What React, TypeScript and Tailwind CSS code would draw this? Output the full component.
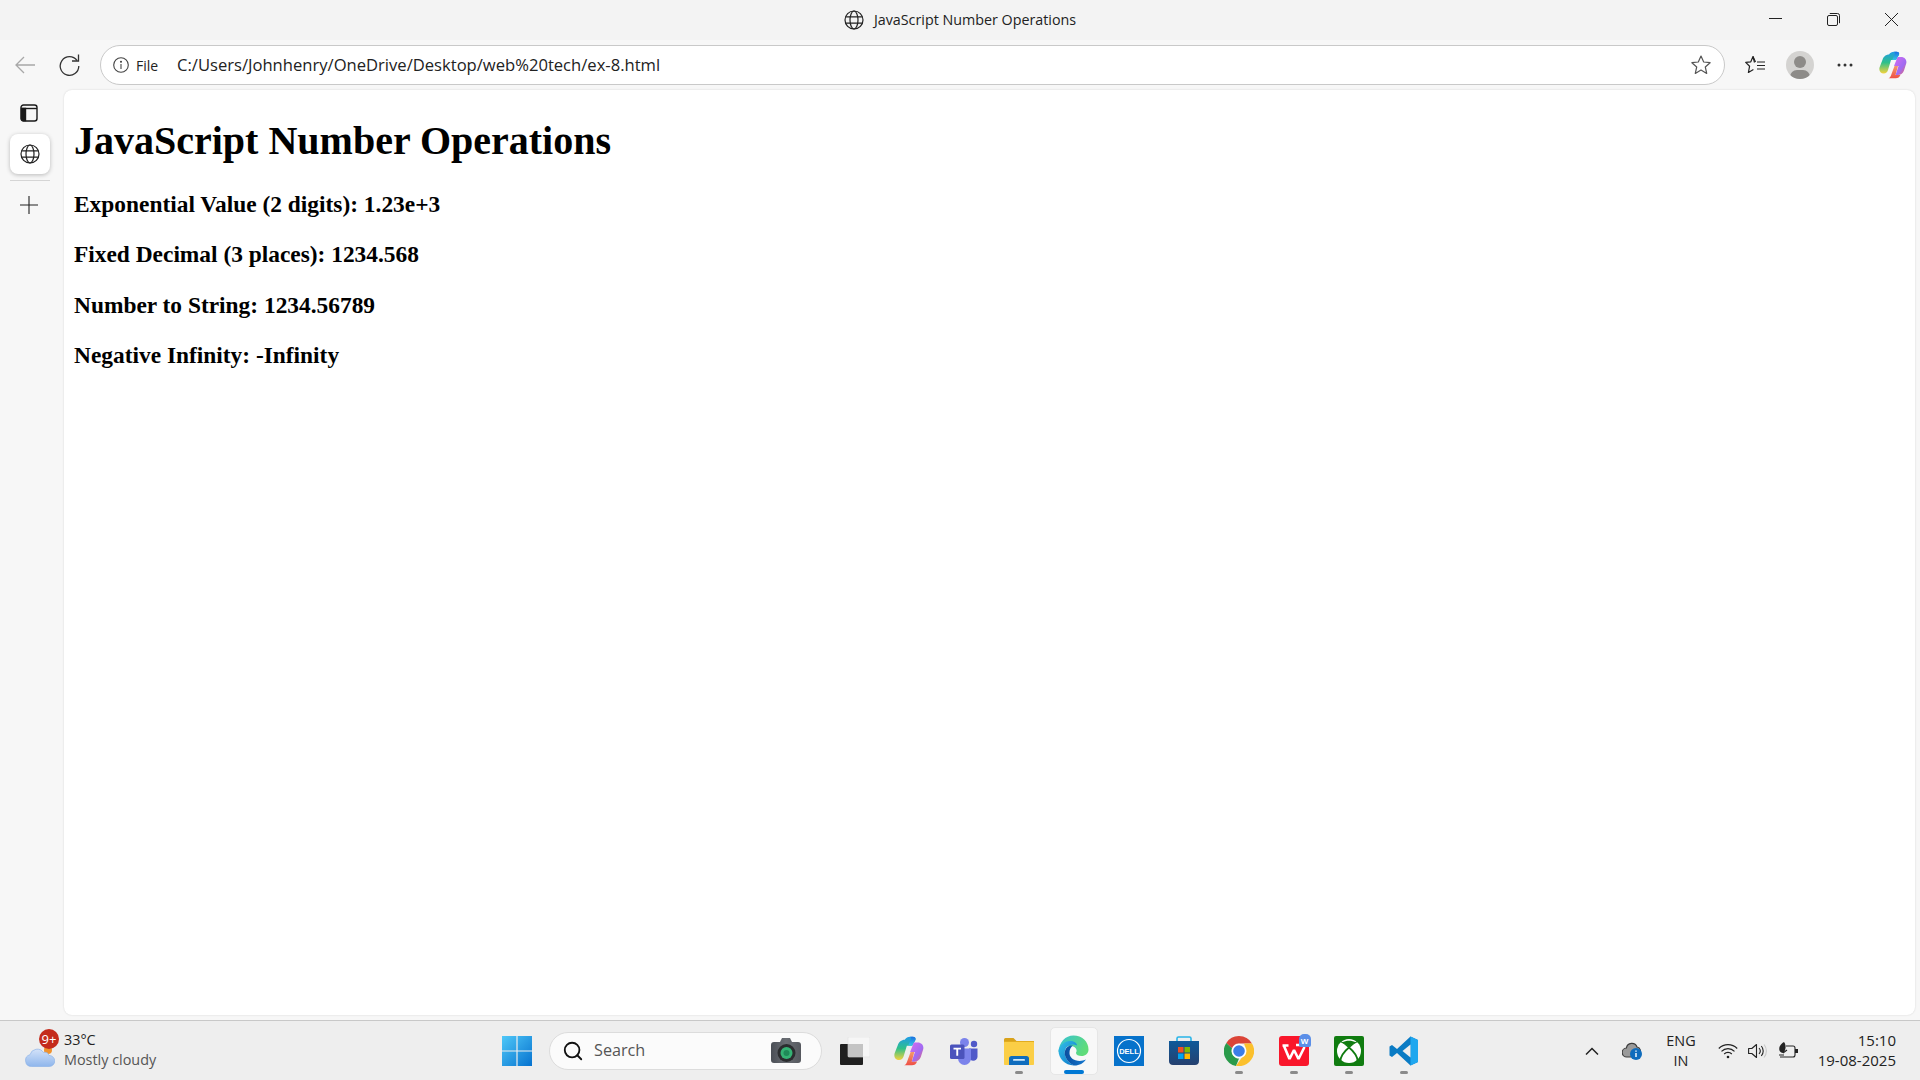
import { Search } from 'lucide-react';

const ui = "font-['Open_Sans','Noto_Sans',sans-serif]";

const Globe = ({ size = 20 }: { size?: number }) => (
  <svg width={size} height={size} viewBox="0 0 20 20" fill="none" stroke="#222" strokeWidth="1.200">
    <circle cx="10" cy="10" r="9" />
    <ellipse cx="10" cy="10" rx="4" ry="9" />
    <path d="M1.600 6.800h16.800M1.600 13.200h16.800" />
  </svg>
);

const CopilotIcon = ({ size = 28 }: { size?: number }) => (
  <svg width={size} height={size} viewBox="0 0 28 28">
    <defs>
      <linearGradient id="cpA" x1="0" y1="0" x2="0" y2="1">
        <stop offset="0" stopColor="#1f9be8" />
        <stop offset="0.5" stopColor="#2fc08a" />
        <stop offset="1" stopColor="#f5d33c" />
      </linearGradient>
      <linearGradient id="cpB" x1="0" y1="0" x2="1" y2="1">
        <stop offset="0" stopColor="#d76bf0" />
        <stop offset="0.6" stopColor="#a06bf2" />
        <stop offset="1" stopColor="#f0655a" />
      </linearGradient>
      <linearGradient id="cpC" x1="0" y1="0" x2="0" y2="1">
        <stop offset="0" stopColor="#1b6ee0" />
        <stop offset="1" stopColor="#35c6e8" />
      </linearGradient>
      <linearGradient id="cpD" x1="0" y1="0" x2="0" y2="1">
        <stop offset="0" stopColor="#f59a6a" />
        <stop offset="1" stopColor="#ee4f45" />
      </linearGradient>
    </defs>
    <path d="M10 3.500C11.200 1.500 13 .7 15 .7h2.600c2 0 3 1.200 2.400 3L17 9H12L9 19c-.6 2-2 3.500-4.200 3.500-3.400 0-5.200-3-4.200-6.300L3.600 8.400C4.400 5.800 7 3.500 10 3.500z" fill="url(#cpA)" />
    <path d="M15 .7h2.600c2 0 3 1.200 2.400 3L17 9h-3.800L15.700 3c.4-1.200 0-2-.7-2.300z" fill="url(#cpC)" />
    <path d="M19 6h3.200c3.600 0 6 3 5 6.500L25 19.500c-.9 3-3.800 4.500-6 4.500h-2.500L19.500 15H15l2.800-7c.3-1 .7-2 1.200-2z" fill="url(#cpB)" />
    <path d="M9.500 27.300h7.300c2 0 4-1.200 4.700-3.600-1 .3-1.800.3-2.500.3h-2.500l2.500-9h-3.500L12.500 23c-.6 2.200-1.500 3.600-3 4.300z" fill="url(#cpD)" />
  </svg>
);

const TeamsIcon = () => (
  <svg width="30" height="30" viewBox="0 0 30 30">
    <circle cx="25" cy="8" r="3.200" fill="#5059c9" />
    <path d="M20 12.500h8.500v8a4.200 4.200 0 0 1-8.500 0z" fill="#5059c9" />
    <circle cx="15.500" cy="6.500" r="4.500" fill="#7b83eb" />
    <path d="M9 12.500h13v10a6.500 6.500 0 0 1-13 0z" fill="#7b83eb" />
    <rect x="1" y="8.500" width="14.500" height="14.500" rx="1.500" fill="#4b53bc" />
    <path d="M4.500 11.800h7.500v1.700H9.200v6.300H7.300v-6.300H4.500z" fill="#fff" />
  </svg>
);

const FolderIcon = () => (
  <svg width="30" height="30" viewBox="0 0 30 30">
    <path d="M0 3.500A1.500 1.500 0 0 1 1.500 2h8l3 3H0z" fill="#d9a21b" />
    <rect x="0" y="5" width="30" height="5" fill="#e2ac1e" />
    <rect x="0" y="6" width="30" height="23" rx="1" fill="#fcd34d" />
    <rect x="0" y="6" width="30" height="23" rx="1" fill="#fbc93c" opacity="0.4" />
    <path d="M5 22.500c0-1.400 1-2.500 2.500-2.500h15c1.500 0 2.500 1.100 2.500 2.500V29H5z" fill="#0f6cbd" />
    <rect x="9" y="23" width="12" height="1.800" rx="0.900" fill="#cfe7fb" />
  </svg>
);

const EdgeIcon = () => (
  <svg width="31" height="31" viewBox="0 0 31 31">
    <defs>
      <linearGradient id="edA" x1="0" y1="0" x2="1" y2="1">
        <stop offset="0" stopColor="#34c1e8" />
        <stop offset="1" stopColor="#0a73c9" />
      </linearGradient>
      <linearGradient id="edB" x1="0" y1="0" x2="1" y2="0.400">
        <stop offset="0" stopColor="#35c1d8" />
        <stop offset="1" stopColor="#5fdc7a" />
      </linearGradient>
      <linearGradient id="edC" x1="0" y1="0" x2="1" y2="0">
        <stop offset="0" stopColor="#0c4f9f" />
        <stop offset="1" stopColor="#1378d0" />
      </linearGradient>
    </defs>
    <path d="M15.500 .5C24 .5 30.500 6.500 30.500 14.500c0 4-3 6.500-7 6.500-3 0-5.500-1-5.500-3 0-.8.6-1.200.6-2.300 0-2.600-3-4.700-6.300-4.700-4 0-7.600 2.200-11.800 6C1 7 7.500 .5 15.500 .5z" fill="url(#edB)" />
    <path d="M.5 15.500c1-5 6-9.500 11.500-9.500 4 0 7 2 7 4.500-2-1-4-1.200-6-.8-4.500 1-7 5-6 10 .8 4.300 4.200 8.800 9.500 10.700C7.500 30.800 .5 24 .5 15.500z" fill="url(#edA)" />
    <path d="M12 10.500c-4 1.500-6 5.500-5 9.700.9 4 4.500 8.500 9.500 10.300 5 0 9-2.300 11.500-6-3 1.500-7 2-10.500 .8-3.400-1.200-6-3.800-6-7.300 0-3 1-5.700 3.500-7.500-1 0-2 0-3 0z" fill="url(#edC)" />
  </svg>
);

const StoreIcon = () => (
  <svg width="30" height="30" viewBox="0 0 30 30">
    <defs><linearGradient id="st" x1="0" y1="0" x2="0" y2="1"><stop offset="0" stopColor="#0f5a9a" /><stop offset="1" stopColor="#25406f" /></linearGradient></defs>
    <path d="M8 6V2.500A1.500 1.500 0 0 1 9.500 1h11A1.500 1.500 0 0 1 22 2.500V6" fill="none" stroke="#28b4e8" strokeWidth="1.600" />
    <path d="M0 5h30v20c0 2.500-1.500 4-4 4H4c-2.500 0-4-1.500-4-4z" fill="url(#st)" />
    <rect x="9" y="11" width="5.500" height="5.500" fill="#f25022" />
    <rect x="15.500" y="11" width="5.500" height="5.500" fill="#7fba00" />
    <rect x="9" y="17.500" width="5.500" height="5.500" fill="#00a4ef" />
    <rect x="15.500" y="17.500" width="5.500" height="5.500" fill="#ffb900" />
  </svg>
);

const ChromeIcon = () => (
  <svg width="30" height="30" viewBox="0 0 30 30">
    <path d="M15 0a15 15 0 0 1 13 7.500H15a7.500 7.500 0 0 0-7 4.800L2.300 6.900A15 15 0 0 1 15 0z" fill="#db4437" />
    <path d="M2.300 6.900L8 12.300a7.500 7.500 0 0 0 7 10.200L12 30A15 15 0 0 1 2.300 6.900z" fill="#2a9a4a" />
    <path d="M28 7.500A15 15 0 0 1 12 29.700l5.500-7.600A7.500 7.500 0 0 0 21.500 11.500L20 7.500z" fill="#fbc02d" />
    <circle cx="15" cy="15" r="7.200" fill="#fff" />
    <circle cx="15" cy="15" r="5.800" fill="#3b7de8" />
  </svg>
);

const WpsIcon = () => (
  <div className="relative w-[30px] h-[30px]">
    <svg width="30" height="30" viewBox="0 0 30 30">
      <rect width="30" height="30" rx="3" fill="#f9162b" />
      <path d="M3.500 9.500h6M5 10l5.500 13 4.500-9 4.500 9L25 12c.8-2-1-3-3-3h-5" fill="none" stroke="#fff" strokeWidth="2.600" strokeLinejoin="bevel" />
    </svg>
    <span className="absolute -top-[2px] -right-[2px] w-[12px] h-[13px] rounded-t-[5px] rounded-b-[2px] bg-[#5b8fe8] text-white text-[8px] leading-[16px] text-center font-bold font-['Liberation_Sans',sans-serif]">W</span>
  </div>
);

const XboxIcon = () => (
  <svg width="30" height="30" viewBox="0 0 30 30">
    <rect width="30" height="30" rx="2" fill="#107c10" />
    <circle cx="15" cy="15" r="12" fill="#fff" />
    <path d="M15 11.500C12.500 9 10.500 7 8 6.500c2-1.200 4.500-1.700 7-1.700s5 .5 7 1.700C19.500 7 17.500 9 15 11.500z" fill="#107c10" />
    <path d="M15 11.500C10 15.500 6.500 21 6 26M15 11.500C20 15.500 23.500 21 24 26" fill="none" stroke="#107c10" strokeWidth="1.800" />
    <path d="M6.500 5.500C9 6.500 12.500 9 15 11.500 17.500 9 21 6.500 23.500 5.500" fill="none" stroke="#107c10" strokeWidth="1.200" />
  </svg>
);

const VsCodeIcon = () => (
  <svg width="30" height="30" viewBox="0 0 30 30">
    <path d="M21.500 .5L29 4v22l-7.500 3.500L8 17l-5 4-2.500-1.500v-9L3 9l5 4z" fill="#0a7bc4" />
    <path d="M21.500 .5L29 4v22l-7.500 3.500z" fill="#1fa7ef" />
    <path d="M21.500 8.500L13.500 15l8 6.500z" fill="#eeeeee" />
  </svg>
);

const DellIcon = () => (
  <svg width="30" height="30" viewBox="0 0 30 30">
    <rect width="30" height="30" fill="#0672cb" />
    <circle cx="15" cy="15" r="11.500" fill="none" stroke="#fff" strokeWidth="1.200" />
    <text x="15" y="17.800" textAnchor="middle" fontSize="7.500" fontWeight="700" fill="#fff" fontFamily="Liberation Sans, sans-serif">DELL</text>
  </svg>
);

const TaskIcon = ({ children, mark, active }: { children: React.ReactNode; mark?: boolean; active?: boolean }) => (
  <div className={`relative w-[55px] h-[48px] flex items-center justify-center ${active ? 'before:content-[""] before:absolute before:left-[3.5px] before:top-0 before:w-[48px] before:h-[48px] before:rounded-[5px] before:bg-[#f8f8f8] before:border before:border-[#e6e6e6]' : ''}`}>
    <div className="relative">{children}</div>
    {mark && <span className="absolute bottom-[1px] left-[23.500px] w-[8px] h-[3px] rounded-full bg-[#8a8a8a]" />}
    {active && <span className="absolute bottom-[1px] left-[17.500px] w-[20px] h-[4px] rounded-full bg-[#0078d4]" />}
  </div>
);

const App = () => {
  return (
    <div className={`w-[1920px] h-[1080px] flex flex-col overflow-hidden bg-[#f7f7f7] text-[#1a1a1a] ${ui}`}>
      {/* title bar */}
      <div className="h-[40px] shrink-0 bg-[#f3f3f3] flex items-center relative">
        <div className="flex-1 flex items-center justify-center gap-[10px] -mt-[1px]">
          <Globe />
          <span className="text-[14.300px] text-[#222]">JavaScript Number Operations</span>
        </div>
        <div className="absolute right-[22px] top-[13px] flex items-start gap-[45px]">
          <svg width="13" height="13" viewBox="0 0 13 13" stroke="#222" fill="none"><path d="M0 5.500h13" /></svg>
          <svg width="13" height="13" viewBox="0 0 13 13" stroke="#222" fill="none"><rect x="0.500" y="2.500" width="10" height="10" rx="1.500" /><path d="M2.800 .5h7.700a2 2 0 0 1 2 2v7.700" /></svg>
          <svg width="13" height="13" viewBox="0 0 13 13" stroke="#222" fill="none"><path d="M0 0l13 13M13 0L0 13" /></svg>
        </div>
      </div>

      {/* toolbar */}
      <div className="h-[50px] shrink-0 flex items-center">
        <div className="w-[100px] flex items-center pl-[15px] gap-[24px]">
          <svg width="20" height="18" viewBox="0 0 20 18" fill="none" stroke="#a8a8a8" strokeWidth="1.300"><path d="M20 9H1M9 1L1 9l8 8" /></svg>
          <svg width="21" height="22" viewBox="0 0 21 22" fill="none" stroke="#333" strokeWidth="1.300"><path d="M18 6.500A9.300 9.300 0 1 0 19.800 12" /><path d="M19.500 .5v6.500h-6.500" /></svg>
        </div>
        <div className="w-[1625px] h-[40px] rounded-full bg-white border border-[#c9c9c9] flex items-center pl-[12px] pr-[13px]">
          <svg width="16" height="16" viewBox="0 0 16 16" fill="none" stroke="#444" strokeWidth="1.100"><circle cx="8" cy="8" r="7.300" /><path d="M8 7v5" /><circle cx="8" cy="4.700" r="0.500" fill="#444" /></svg>
          <span className="ml-[7px] w-[41px] text-[14px] text-[#222]">File</span>
          <span className="flex-1 text-[16.600px] text-[#222]">C:/Users/Johnhenry/OneDrive/Desktop/web%20tech/ex-8.html</span>
          <svg width="20" height="20" viewBox="0 0 20 20" fill="none" stroke="#555" strokeWidth="1.200"><path d="M10 1l2.700 6 6.400 .7-4.800 4.300 1.400 6.400L10 15.100l-5.700 3.300 1.400-6.400L.9 7.700 7.300 7z" strokeLinejoin="round" /></svg>
        </div>
        <div className="flex-1 flex items-center pl-[20px]">
          <svg width="20" height="20" viewBox="0 0 20 20" fill="none" stroke="#222" strokeWidth="1.200"><path d="M9.500 7.500L8 1.500 5.800 6.800 .7 7.400l3.900 3.800-1.200 6.300 5-2.900" strokeLinejoin="round" /><path d="M8 1.500l2.500 5.500M12 7h8M12 10.500h8M12 14h8" /></svg>
          <div className="ml-[21px] w-[28px] h-[28px] rounded-full bg-[#d4d3d1] relative overflow-hidden">
            <span className="absolute left-[8px] top-[5px] w-[12px] h-[12px] rounded-full bg-[#8d8b88]" />
            <span className="absolute left-[4px] top-[19px] w-[20px] h-[14px] rounded-full bg-[#8d8b88]" />
          </div>
          <svg className="ml-[23px]" width="16" height="4" viewBox="0 0 16 4" fill="#333"><circle cx="2" cy="2" r="1.500" /><circle cx="8" cy="2" r="1.500" /><circle cx="14" cy="2" r="1.500" /></svg>
          <div className="ml-[26px]"><CopilotIcon /></div>
        </div>
      </div>

      {/* main */}
      <div className="flex-1 flex min-h-0">
        <div className="w-[64px] shrink-0 flex flex-col items-center pr-[5px] pt-[14px]">
          <svg className="-ml-[1px]" width="18" height="18" viewBox="0 0 18 18" fill="none" stroke="#1a1a1a" strokeWidth="1.400">
            <rect x="1" y="1" width="16" height="16" rx="2.500" />
            <path d="M1 4.500h16" />
            <path d="M1.500 4.500h4v12h-2a2 2 0 0 1-2-2z" fill="#1a1a1a" />
          </svg>
          <div className="mt-[12px] w-[40px] h-[40px] rounded-[8px] bg-white shadow-[0_1px_4px_rgba(0,0,0,0.25)] flex items-center justify-center">
            <Globe />
          </div>
          <div className="mt-[6px] w-[40px] h-px bg-[#d5d5d5]" />
          <svg className="mt-[15px] -ml-[1px]" width="18" height="18" viewBox="0 0 18 18" stroke="#222" strokeWidth="1.100"><path d="M9 0v18M0 9h18" /></svg>
        </div>
        <div className="flex-1 mr-[5px] mb-[5px] bg-white rounded-[8px] shadow-[0_0_2px_rgba(0,0,0,0.15)] pl-[10px] pt-[28px] text-black font-bold font-['Liberation_Serif',serif]">
          <h1 className="text-[40px] leading-[46px]">JavaScript Number Operations</h1>
          <h3 className="mt-[27px] text-[23.400px] leading-[27px]">Exponential Value (2 digits): 1.23e+3</h3>
          <h3 className="mt-[23.400px] text-[23.400px] leading-[27px]">Fixed Decimal (3 places): 1234.568</h3>
          <h3 className="mt-[23.400px] text-[23.400px] leading-[27px]">Number to String: 1234.56789</h3>
          <h3 className="mt-[23.400px] text-[23.400px] leading-[27px]">Negative Infinity: -Infinity</h3>
        </div>
      </div>

      {/* taskbar */}
      <div className="h-[60px] shrink-0 bg-[#eeeeee] border-t border-[#c8c8c8] flex items-center">
        <div className="w-[502px] shrink-0 flex items-center pl-[25px] relative -mt-[2px]">
          <svg className="mt-[13px]" width="30" height="21" viewBox="0 0 30 21">
            <defs><linearGradient id="cl" x1="0" y1="0" x2="0" y2="1"><stop offset="0" stopColor="#d3e2f9" /><stop offset="1" stopColor="#8fb6ec" /></linearGradient></defs>
            <circle cx="23" cy="4" r="4" fill="#f0922e" />
            <path d="M6.500 20.500a6 6 0 0 1-1.500-11.800A7.500 7.500 0 0 1 18.500 6.500a4.500 4.500 0 0 1 5.500 3 5.500 5.500 0 0 1 .5 11z" fill="url(#cl)" stroke="#86aee6" strokeWidth="0.600" />
          </svg>
          <span className="absolute left-[39px] -top-[1px] w-[20px] h-[20px] rounded-full bg-[#c42b1c] text-white text-[13px] leading-[20px] text-center">9+</span>
          <div className="ml-[9px] text-[14.400px] leading-[20px]">
            <div className="text-[#222]">33°C</div>
            <div className="text-[#555]">Mostly cloudy</div>
          </div>
        </div>
        <svg width="30" height="30" viewBox="0 0 30 30">
          <defs><linearGradient id="win" x1="0" y1="0" x2="1" y2="1"><stop offset="0" stopColor="#4fc8f8" /><stop offset="1" stopColor="#0672cf" /></linearGradient></defs>
          <path d="M0 0h14.400v14.400H0zM15.600 0H30v14.400H15.600zM0 15.600h14.400V30H0zM15.600 15.600H30V30H15.600z" fill="url(#win)" />
        </svg>
        <div className="ml-[17px] w-[273px] h-[38px] rounded-full bg-[#fbfbfb] border border-[#dcdcdc] flex items-center pl-[12px] pr-[20px]">
          <Search size={22} color="#111" strokeWidth={2} />
          <span className="ml-[10px] flex-1 text-[16.200px] text-[#555]">Search</span>
          <svg width="30" height="26" viewBox="0 0 30 26">
            <defs><linearGradient id="cam" x1="0" y1="0" x2="1" y2="0"><stop offset="0" stopColor="#4a4e55" /><stop offset="0.5" stopColor="#6a6e74" /><stop offset="1" stopColor="#55585e" /></linearGradient></defs>
            <path d="M9 4l2-4h8l2 4h6a3 3 0 0 1 3 3v15a3 3 0 0 1-3 3H3a3 3 0 0 1-3-3V7a3 3 0 0 1 3-3z" fill="url(#cam)" />
            <circle cx="15.500" cy="15" r="9" fill="#2b2d2f" />
            <circle cx="15.500" cy="15" r="6" fill="#35b274" />
            <circle cx="15.500" cy="15" r="3" fill="#1f8a58" />
          </svg>
        </div>
        <div className="ml-[4px] flex items-center">
          <TaskIcon>
            <svg className="ml-[3px]" width="30" height="28" viewBox="0 0 30 28">
              <rect x="0" y="7" width="23" height="21" rx="1" fill="#1f1f1f" />
              <rect x="8" y="0" width="22" height="20" rx="1" fill="#f6f6f6" stroke="#e2e2e2" strokeWidth="0.600" />
              <rect x="8" y="7" width="15" height="13" fill="#c4c4c4" />
            </svg>
          </TaskIcon>
          <TaskIcon><CopilotIcon size={30} /></TaskIcon>
          <TaskIcon><TeamsIcon /></TaskIcon>
          <TaskIcon mark><FolderIcon /></TaskIcon>
          <TaskIcon active><EdgeIcon /></TaskIcon>
          <TaskIcon><DellIcon /></TaskIcon>
          <TaskIcon><StoreIcon /></TaskIcon>
          <TaskIcon mark><ChromeIcon /></TaskIcon>
          <TaskIcon mark><WpsIcon /></TaskIcon>
          <TaskIcon mark><XboxIcon /></TaskIcon>
          <TaskIcon mark><VsCodeIcon /></TaskIcon>
        </div>
        <div className="flex-1 flex items-center justify-end pr-[24px]">
          <svg width="14" height="8" viewBox="0 0 14 8" fill="none" stroke="#222" strokeWidth="1.500"><path d="M1 7.500l6-6 6 6" /></svg>
          <div className="ml-[23px] relative w-[20px] h-[18px]">
            <svg width="20" height="18" viewBox="0 0 20 18">
              <path d="M5 15a4.500 4.500 0 0 1-.6-9A5.500 5.500 0 0 1 15 5a4 4 0 0 1 2 7v3z" fill="#9a9a9a" stroke="#3c3c3c" strokeWidth="1.200" />
              <circle cx="14" cy="12" r="6" fill="#0f6cbd" />
              <path d="M14 11v4M14 8.500v1.200" stroke="#fff" strokeWidth="1.400" />
            </svg>
          </div>
          <div className="ml-[23px] w-[32px] text-center text-[14.400px] leading-[20px] text-[#222]">
            <div>ENG</div>
            <div>IN</div>
          </div>
          <svg className="ml-[21px]" width="20" height="16" viewBox="0 0 20 16" fill="none" stroke="#222" strokeWidth="1.200"><path d="M.8 5.500a13 13 0 0 1 18.400 0M3.500 8.300a9.200 9.200 0 0 1 13 0M6.200 11a5.400 5.400 0 0 1 7.600 0" /><circle cx="10" cy="14" r="1.300" fill="#222" stroke="none" /></svg>
          <svg className="ml-[10px]" width="19" height="16" viewBox="0 0 19 16" fill="none" stroke="#222" strokeWidth="1.100"><path d="M.6 5.500h3.200L8.500 1.500v13l-4.700-4H.6z" strokeLinejoin="round" /><path d="M11 5a4.500 4.500 0 0 1 0 6M13.300 3a7.500 7.500 0 0 1 0 10" /><path d="M16 1.500a10 10 0 0 1 0 13" stroke="#c8c8c8" /></svg>
          <svg className="ml-[11px]" width="20" height="18" viewBox="0 0 20 18" fill="none" stroke="#222" strokeWidth="1.100">
            <path d="M8 4h7a2 2 0 0 1 2 2v7a2 2 0 0 1-2 2H2" />
            <path d="M17.500 7.500h2v3h-2z" fill="#222" />
            <path d="M6 0C2.500 2 .5 5 1.500 8.500c.5 1.500 2 2.500 3.500 2.500C8 8.500 8.500 3 6 0z" fill="#222" stroke="none" />
            <path d="M5 11l4-3M1 13h5" />
          </svg>
          <div className="ml-[20px] w-[78px] -mt-[1px] text-right text-[15px] leading-[20px] text-[#222] whitespace-nowrap flex flex-col items-end">
            <div>15:10</div>
            <div>19-08-2025</div>
          </div>
        </div>
      </div>
    </div>
  );
};

export default App;
